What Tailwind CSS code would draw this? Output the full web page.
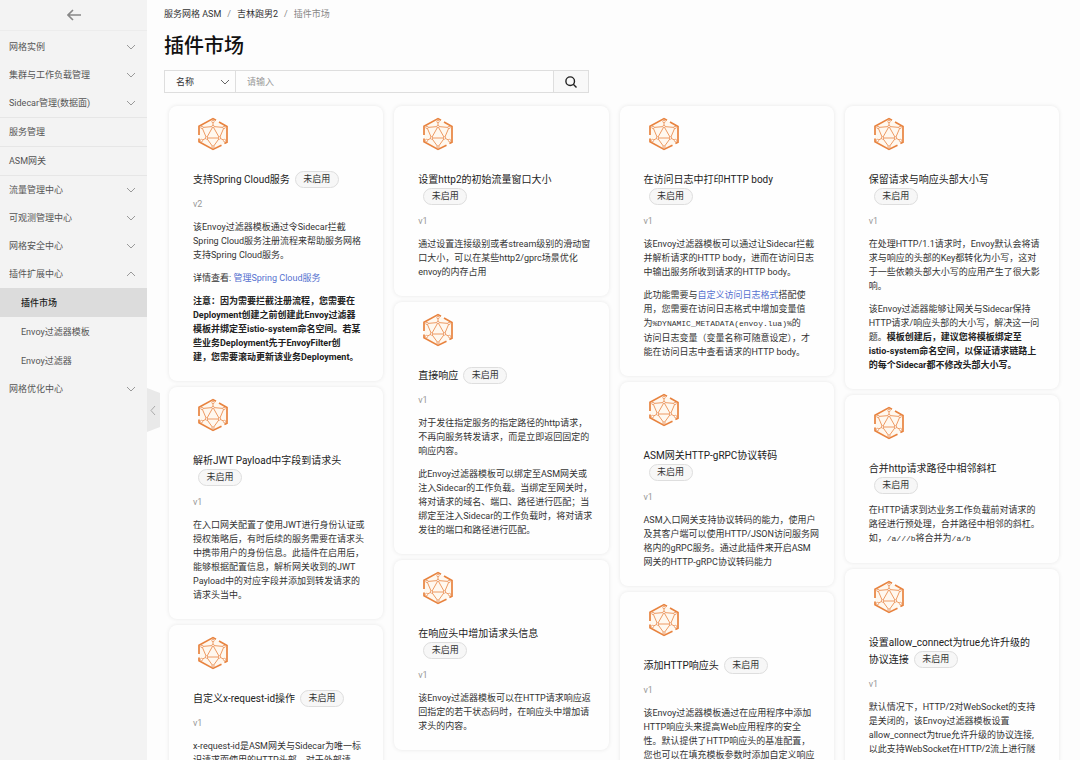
<!DOCTYPE html>
<html lang="zh-CN">
<head>
    <meta charset="UTF-8">
    <meta name="viewport" content="width=device-width, initial-scale=1.0">
    <title>插件市场 - 服务网格 ASM</title>
    <script src="https://cdn.jsdelivr.net/npm/@tailwindcss/browser@4"></script>
</head>
<body class="flex h-screen overflow-hidden bg-[#fdfdfd] font-['Roboto','Noto_Sans_CJK_SC',sans-serif] text-[9px] leading-[14px] text-[#333]">
    <!-- Shared symbols -->
    <svg class="hidden">
        <symbol id="down" viewBox="0 0 10 6"><path d="M1 1l4 4 4-4" fill="none" stroke="currentColor"/></symbol>
        <symbol id="up" viewBox="0 0 10 6"><path d="M1 5l4-4 4 4" fill="none" stroke="currentColor"/></symbol>
        <symbol id="plugin" viewBox="0 0 32 34">
            <path d="M16 2L30 9.400V25L16 32 2 25V9.400z" fill="#fff8ef"/>
            <g fill="none" stroke="#e8833f" stroke-width="1.7">
                <path d="M2 18V9.200L16 1.600l3 1.600M22 5l8 4.400v15.800l-2.600 1.400M24.500 28.200L16 32.400 2 24.800V21.500"/>
            </g>
            <g fill="none" stroke="#ee9a62" stroke-width="1">
                <path d="M16 9.500L9.500 21h13zM16 9.500L5 10.500 9.500 21 16 30 22.500 21 27 10.500zM16 9V4.500M9.500 21L4.500 23.500M22.500 21l5 2.500"/>
            </g>
            <g fill="#fff" stroke="#e8935a" stroke-width="0.8">
                <circle cx="16" cy="4.500" r="1.200"/><circle cx="16" cy="9.500" r="1.200"/><circle cx="5" cy="10.500" r="1.200"/><circle cx="27" cy="10.500" r="1.200"/>
                <circle cx="9.500" cy="21" r="1.200"/><circle cx="22.500" cy="21" r="1.200"/><circle cx="16" cy="30" r="1.200"/><circle cx="4.500" cy="23.500" r="1.200"/><circle cx="27.500" cy="23.500" r="1.200"/>
            </g>
        </symbol>
    </svg>

    <aside class="relative w-[147px] shrink-0 bg-[#f3f3f3] text-[#555]">
        <button class="flex h-[31px] w-full items-center justify-center border-b border-[#ececec] text-[#888]" aria-label="返回">
            <svg class="h-3 w-[14px]" viewBox="0 0 14 12" fill="none" stroke="currentColor" stroke-width="1.6"><path d="M14 6H1M6 1L1 6l5 5"/></svg>
        </button>
        <nav>
            <div class="pt-[2px]">
                <button class="flex h-7 w-full items-center justify-between pl-[9px] pr-[11px]">网格实例<svg class="h-[6px] w-[10px] text-[#999]"><use href="#down"/></svg></button>
                <button class="flex h-7 w-full items-center justify-between pl-[9px] pr-[11px]">集群与工作负载管理<svg class="h-[6px] w-[10px] text-[#999]"><use href="#down"/></svg></button>
                <button class="flex h-7 w-full items-center justify-between pl-[9px] pr-[11px]">Sidecar管理(数据面)<svg class="h-[6px] w-[10px] text-[#999]"><use href="#down"/></svg></button>
            </div>
            <a href="#" class="flex h-[29px] items-center border-t border-[#e6e6e6] pl-[9px]">服务管理</a>
            <a href="#" class="flex h-[29px] items-center border-t border-[#e6e6e6] pl-[9px]">ASM网关</a>
            <div class="border-t border-[#e6e6e6]">
                <button class="flex h-7 w-full items-center justify-between pl-[9px] pr-[11px]">流量管理中心<svg class="h-[6px] w-[10px] text-[#999]"><use href="#down"/></svg></button>
                <button class="flex h-7 w-full items-center justify-between pl-[9px] pr-[11px]">可观测管理中心<svg class="h-[6px] w-[10px] text-[#999]"><use href="#down"/></svg></button>
                <button class="flex h-7 w-full items-center justify-between pl-[9px] pr-[11px]">网格安全中心<svg class="h-[6px] w-[10px] text-[#999]"><use href="#down"/></svg></button>
                <button class="flex h-7 w-full items-center justify-between pl-[9px] pr-[11px]">插件扩展中心<svg class="h-[6px] w-[10px] text-[#999]"><use href="#up"/></svg></button>
                <a href="#" class="flex h-[29px] items-center bg-[#dcdcdc] pl-[21px] font-medium text-[#222]">插件市场</a>
                <a href="#" class="flex h-[29px] items-center pl-[21px]">Envoy过滤器模板</a>
                <a href="#" class="flex h-[29px] items-center pl-[21px]">Envoy过滤器</a>
                <button class="flex h-7 w-full items-center justify-between pl-[9px] pr-[11px]">网格优化中心<svg class="h-[6px] w-[10px] text-[#999]"><use href="#down"/></svg></button>
            </div>
        </nav>
        <!-- Collapse handle -->
        <button class="absolute left-full top-[388px] h-11 w-[13px]" aria-label="收起">
            <svg class="h-11 w-[13px]" viewBox="0 0 13 44"><path d="M0 0l13 5v34L0 44z" fill="#e9e9e9"/><path d="M8 18l-4 4.500 4 4.500" fill="none" stroke="#aaa"/></svg>
        </button>
    </aside>

    <main class="min-w-0 flex-1">
        <nav class="flex gap-[6px] pl-[17px] pt-[7px]">
            <a href="#">服务网格 ASM</a><span class="text-[#888]">/</span><a href="#">吉林跑男2</a><span class="text-[#888]">/</span><span class="text-[#888]">插件市场</span>
        </nav>
        <h1 class="mt-[11px] pl-[17px] text-[20px] font-medium leading-7 text-[#111]">插件市场</h1>
        <form class="ml-[17px] mt-[10px] flex h-[23px] w-[425px] border border-[#dedede]">
            <div class="relative w-[71px] border-r border-[#dedede]">
                <select class="h-full w-full appearance-none pl-[11px] outline-none" aria-label="搜索字段"><option>名称</option></select>
                <svg class="pointer-events-none absolute right-[5px] top-[8px] h-[6px] w-[10px] text-[#666]"><use href="#down"/></svg>
            </div>
            <input type="text" placeholder="请输入" aria-label="搜索" class="min-w-0 flex-1 pl-[11px] outline-none placeholder:text-[#999]">
            <button class="flex w-[35px] items-center justify-center border-l border-[#dedede] bg-[#f8f8f8] text-[#222]" aria-label="查询">
                <svg class="size-3" viewBox="0 0 12 12" fill="none" stroke="currentColor" stroke-width="1.4"><circle cx="5.200" cy="5.200" r="4.300"/><path d="M8.300 8.300l3.200 3.200"/></svg>
            </button>
        </form>

        <div class="mt-[13px] grid grid-cols-4 items-start gap-x-[11px] pl-[22px] pr-[21px]">
            <div class="flex flex-col gap-[6px]">
                <article class="rounded-lg bg-[#fefefe] pb-[17px] pl-6 pr-3 pt-[11px] shadow-[0_0_4px_rgba(0,0,0,0.09)]">
                    <svg class="ml-1 h-[34px] w-8"><use href="#plugin"/></svg>
                    <h2 class="mr-3 mt-5 text-[10px] leading-[17px] text-[#222]">支持Spring Cloud服务<span class="ml-[5px] inline-flex h-[17px] w-11 items-center justify-center rounded-full border border-[#dedede] bg-[#f7f7f7] align-top text-[9px] text-[#333]">未启用</span></h2>
                    <p class="mt-[9px] text-[#999]">v2</p>
                    <div class="mt-[9px] space-y-[9px]">
                        <p>该Envoy过滤器模板通过令Sidecar拦截<br>Spring Cloud服务注册流程来帮助服务网格<br>支持Spring Cloud服务。</p>
                        <p>详情查看: <a href="#" class="text-[#5571d0]">管理Spring Cloud服务</a></p>
                        <p class="font-bold text-[#222]">注意：因为需要拦截注册流程，您需要在<br>Deployment创建之前创建此Envoy过滤器<br>模板并绑定至istio-system命名空间。若某<br>些业务Deployment先于EnvoyFilter创<br>建，您需要滚动更新该业务Deployment。</p>
                    </div>
                </article>
                <article class="rounded-lg bg-[#fefefe] pb-[17px] pl-6 pr-3 pt-[11px] shadow-[0_0_4px_rgba(0,0,0,0.09)]">
                    <svg class="ml-1 h-[34px] w-8"><use href="#plugin"/></svg>
                    <h2 class="mr-3 mt-5 text-[10px] leading-[17px] text-[#222]">解析JWT Payload中字段到请求头<span class="ml-[5px] inline-flex h-[17px] w-11 items-center justify-center rounded-full border border-[#dedede] bg-[#f7f7f7] align-top text-[9px] text-[#333]">未启用</span></h2>
                    <p class="mt-[9px] text-[#999]">v1</p>
                    <p class="mt-[9px]">在入口网关配置了使用JWT进行身份认证或<br>授权策略后，有时后续的服务需要在请求头<br>中携带用户的身份信息。此插件在启用后，<br>能够根据配置信息，解析网关收到的JWT<br>Payload中的对应字段并添加到转发请求的<br>请求头当中。</p>
                </article>
                <article class="rounded-lg bg-[#fefefe] pb-[17px] pl-6 pr-3 pt-[11px] shadow-[0_0_4px_rgba(0,0,0,0.09)]">
                    <svg class="ml-1 h-[34px] w-8"><use href="#plugin"/></svg>
                    <h2 class="mr-3 mt-5 text-[10px] leading-[17px] text-[#222]">自定义x-request-id操作<span class="ml-[5px] inline-flex h-[17px] w-11 items-center justify-center rounded-full border border-[#dedede] bg-[#f7f7f7] align-top text-[9px] text-[#333]">未启用</span></h2>
                    <p class="mt-[9px] text-[#999]">v1</p>
                    <p class="mt-[9px]">x-request-id是ASM网关与Sidecar为唯一标<br>识请求而使用的HTTP头部，对于外部请</p>
                </article>
            </div>

            <div class="flex flex-col gap-[6px]">
                <article class="rounded-lg bg-[#fefefe] pb-[17px] pl-6 pr-3 pt-[11px] shadow-[0_0_4px_rgba(0,0,0,0.09)]">
                    <svg class="ml-1 h-[34px] w-8"><use href="#plugin"/></svg>
                    <h2 class="mr-3 mt-5 text-[10px] leading-[17px] text-[#222]">设置http2的初始流量窗口大小<span class="ml-[5px] inline-flex h-[17px] w-11 items-center justify-center rounded-full border border-[#dedede] bg-[#f7f7f7] align-top text-[9px] text-[#333]">未启用</span></h2>
                    <p class="mt-[9px] text-[#999]">v1</p>
                    <p class="mt-[9px]">通过设置连接级别或者stream级别的滑动窗<br>口大小，可以在某些http2/gprc场景优化<br>envoy的内存占用</p>
                </article>
                <article class="rounded-lg bg-[#fefefe] pb-[17px] pl-6 pr-3 pt-[11px] shadow-[0_0_4px_rgba(0,0,0,0.09)]">
                    <svg class="ml-1 h-[34px] w-8"><use href="#plugin"/></svg>
                    <h2 class="mr-3 mt-5 text-[10px] leading-[17px] text-[#222]">直接响应<span class="ml-[5px] inline-flex h-[17px] w-11 items-center justify-center rounded-full border border-[#dedede] bg-[#f7f7f7] align-top text-[9px] text-[#333]">未启用</span></h2>
                    <p class="mt-[9px] text-[#999]">v1</p>
                    <div class="mt-[9px] space-y-[9px]">
                        <p>对于发往指定服务的指定路径的http请求，<br>不再向服务转发请求，而是立即返回固定的<br>响应内容。</p>
                        <p>此Envoy过滤器模板可以绑定至ASM网关或<br>注入Sidecar的工作负载。当绑定至网关时，<br>将对请求的域名、端口、路径进行匹配；当<br>绑定至注入Sidecar的工作负载时，将对请求<br>发往的端口和路径进行匹配。</p>
                    </div>
                </article>
                <article class="rounded-lg bg-[#fefefe] pb-[17px] pl-6 pr-3 pt-[11px] shadow-[0_0_4px_rgba(0,0,0,0.09)]">
                    <svg class="ml-1 h-[34px] w-8"><use href="#plugin"/></svg>
                    <h2 class="mr-3 mt-5 text-[10px] leading-[17px] text-[#222]">在响应头中增加请求头信息<span class="ml-[5px] inline-flex h-[17px] w-11 items-center justify-center rounded-full border border-[#dedede] bg-[#f7f7f7] align-top text-[9px] text-[#333]">未启用</span></h2>
                    <p class="mt-[9px] text-[#999]">v1</p>
                    <p class="mt-[9px]">该Envoy过滤器模板可以在HTTP请求响应返<br>回指定的若干状态码时，在响应头中增加请<br>求头的内容。</p>
                </article>
            </div>

            <div class="flex flex-col gap-[6px]">
                <article class="rounded-lg bg-[#fefefe] pb-[17px] pl-6 pr-3 pt-[11px] shadow-[0_0_4px_rgba(0,0,0,0.09)]">
                    <svg class="ml-1 h-[34px] w-8"><use href="#plugin"/></svg>
                    <h2 class="mr-3 mt-5 text-[10px] leading-[17px] text-[#222]">在访问日志中打印HTTP body<span class="ml-[5px] inline-flex h-[17px] w-11 items-center justify-center rounded-full border border-[#dedede] bg-[#f7f7f7] align-top text-[9px] text-[#333]">未启用</span></h2>
                    <p class="mt-[9px] text-[#999]">v1</p>
                    <div class="mt-[9px] space-y-[9px]">
                        <p>该Envoy过滤器模板可以通过让Sidecar拦截<br>并解析请求的HTTP body，进而在访问日志<br>中输出服务所收到请求的HTTP body。</p>
                        <p>此功能需要与<a href="#" class="text-[#5571d0]">自定义访问日志格式</a>搭配使<br>用，您需要在访问日志格式中增加变量值<br>为<code class="font-['Liberation_Mono',monospace] text-[8px]">%DYNAMIC_METADATA(envoy.lua)%</code>的<br>访问日志变量（变量名称可随意设定），才<br>能在访问日志中查看请求的HTTP body。</p>
                    </div>
                </article>
                <article class="rounded-lg bg-[#fefefe] pb-[17px] pl-6 pr-3 pt-[11px] shadow-[0_0_4px_rgba(0,0,0,0.09)]">
                    <svg class="ml-1 h-[34px] w-8"><use href="#plugin"/></svg>
                    <h2 class="mr-3 mt-5 text-[10px] leading-[17px] text-[#222]">ASM网关HTTP-gRPC协议转码<span class="ml-[5px] inline-flex h-[17px] w-11 items-center justify-center rounded-full border border-[#dedede] bg-[#f7f7f7] align-top text-[9px] text-[#333]">未启用</span></h2>
                    <p class="mt-[9px] text-[#999]">v1</p>
                    <p class="mt-[9px]">ASM入口网关支持协议转码的能力，使用户<br>及其客户端可以使用HTTP/JSON访问服务网<br>格内的gRPC服务。通过此插件来开启ASM<br>网关的HTTP-gRPC协议转码能力</p>
                </article>
                <article class="rounded-lg bg-[#fefefe] pb-[17px] pl-6 pr-3 pt-[11px] shadow-[0_0_4px_rgba(0,0,0,0.09)]">
                    <svg class="ml-1 h-[34px] w-8"><use href="#plugin"/></svg>
                    <h2 class="mr-3 mt-5 text-[10px] leading-[17px] text-[#222]">添加HTTP响应头<span class="ml-[5px] inline-flex h-[17px] w-11 items-center justify-center rounded-full border border-[#dedede] bg-[#f7f7f7] align-top text-[9px] text-[#333]">未启用</span></h2>
                    <p class="mt-[9px] text-[#999]">v1</p>
                    <p class="mt-[9px]">该Envoy过滤器模板通过在应用程序中添加<br>HTTP响应头来提高Web应用程序的安全<br>性。默认提供了HTTP响应头的基准配置，<br>您也可以在填充模板参数时添加自定义响应</p>
                </article>
            </div>

            <div class="flex flex-col gap-[6px]">
                <article class="rounded-lg bg-[#fefefe] pb-[17px] pl-6 pr-3 pt-[11px] shadow-[0_0_4px_rgba(0,0,0,0.09)]">
                    <svg class="ml-1 h-[34px] w-8"><use href="#plugin"/></svg>
                    <h2 class="mr-3 mt-5 text-[10px] leading-[17px] text-[#222]">保留请求与响应头部大小写<span class="ml-[5px] inline-flex h-[17px] w-11 items-center justify-center rounded-full border border-[#dedede] bg-[#f7f7f7] align-top text-[9px] text-[#333]">未启用</span></h2>
                    <p class="mt-[9px] text-[#999]">v1</p>
                    <div class="mt-[9px] space-y-[9px]">
                        <p>在处理HTTP/1.1请求时，Envoy默认会将请<br>求与响应的头部的Key都转化为小写，这对<br>于一些依赖头部大小写的应用产生了很大影<br>响。</p>
                        <p>该Envoy过滤器能够让网关与Sidecar保持<br>HTTP请求/响应头部的大小写，解决这一问<br>题。<strong class="text-[#222]">模板创建后，建议您将模板绑定至<br>istio-system命名空间，以保证请求链路上<br>的每个Sidecar都不修改头部大小写。</strong></p>
                    </div>
                </article>
                <article class="rounded-lg bg-[#fefefe] pb-[17px] pl-6 pr-3 pt-[11px] shadow-[0_0_4px_rgba(0,0,0,0.09)]">
                    <svg class="ml-1 h-[34px] w-8"><use href="#plugin"/></svg>
                    <h2 class="mr-3 mt-5 text-[10px] leading-[17px] text-[#222]">合并http请求路径中相邻斜杠<span class="ml-[5px] inline-flex h-[17px] w-11 items-center justify-center rounded-full border border-[#dedede] bg-[#f7f7f7] align-top text-[9px] text-[#333]">未启用</span></h2>
                    <p class="mt-[9px]">在HTTP请求到达业务工作负载前对请求的<br>路径进行预处理，合并路径中相邻的斜杠。<br>如，<code class="font-['Liberation_Mono',monospace] text-[8px]">/a///b</code>将合并为<code class="font-['Liberation_Mono',monospace] text-[8px]">/a/b</code></p>
                </article>
                <article class="rounded-lg bg-[#fefefe] pb-[17px] pl-6 pr-3 pt-[11px] shadow-[0_0_4px_rgba(0,0,0,0.09)]">
                    <svg class="ml-1 h-[34px] w-8"><use href="#plugin"/></svg>
                    <h2 class="mr-3 mt-5 text-[10px] leading-[17px] text-[#222]">设置allow_connect为true允许升级的<br>协议连接<span class="ml-[5px] inline-flex h-[17px] w-11 items-center justify-center rounded-full border border-[#dedede] bg-[#f7f7f7] align-top text-[9px] text-[#333]">未启用</span></h2>
                    <p class="mt-[9px] text-[#999]">v1</p>
                    <p class="mt-[9px]">默认情况下，HTTP/2对WebSocket的支持<br>是关闭的，该Envoy过滤器模板设置<br>allow_connect为true允许升级的协议连接,<br>以此支持WebSocket在HTTP/2流上进行隧</p>
                </article>
            </div>
        </div>
    </main>
</body>
</html>
